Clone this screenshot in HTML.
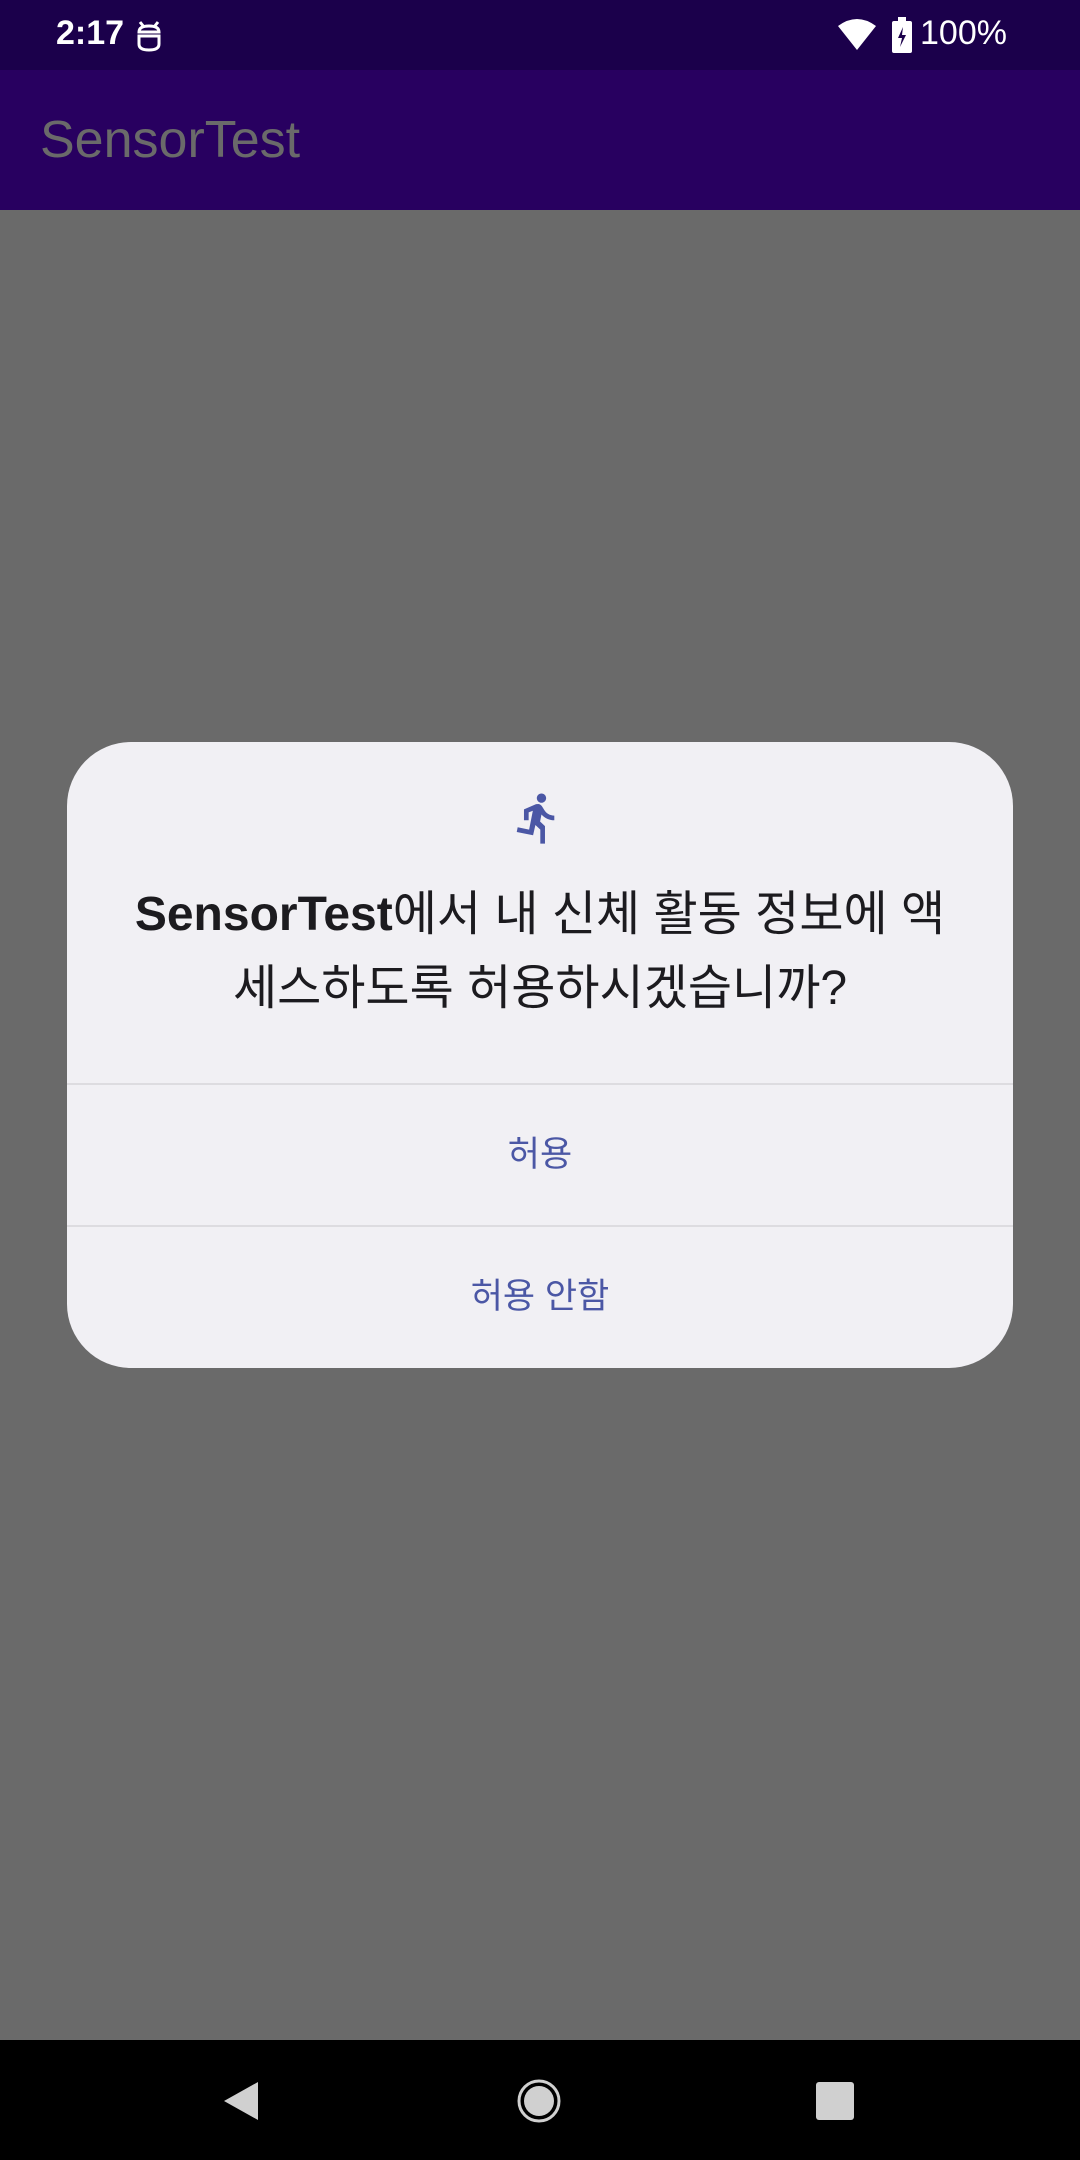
<!DOCTYPE html>
<html><head><meta charset="utf-8"><style>
*{margin:0;padding:0;box-sizing:border-box}
body{width:1080px;height:2160px;background:#6a6a6a;position:relative;overflow:hidden;font-family:"Liberation Sans","Noto Sans CJK KR",sans-serif}
.sb{position:absolute;top:0;left:0;width:1080px;height:70px;background:#1b004b;color:#fff}
.ab{position:absolute;top:70px;left:0;width:1080px;height:140px;background:#280060}
.ab span{position:absolute;left:40px;top:40px;font-size:52px;color:#6a6a6a}
.dlg{position:absolute;left:67px;top:742px;width:946px;height:626px;background:#f1f0f4;border-radius:64px;overflow:hidden}
.t{position:absolute;top:136px;left:0;width:946px;text-align:center;font-size:48px;line-height:74px;color:#1c1b1f}
.hr{position:absolute;left:0;width:946px;height:2px;background:#dddce0}
.btn{position:absolute;left:0;width:946px;text-align:center;font-size:35px;color:#4b57a5}
.nav{position:absolute;top:2040px;left:0;width:1080px;height:120px;background:#000}
</style></head><body>
<div class="sb">
<span style="position:absolute;left:56px;top:14px;font-size:34px;font-weight:bold">2:17</span>
<svg style="position:absolute;left:136px;top:18px" width="26" height="34" viewBox="0 0 26 34"><path d="M4 4 L8 9 M22 4 L18 9 M3 14 Q3 8 13 8 Q23 8 23 14 Z M3 18 H23 V26 Q23 32 13 32 Q3 32 3 26 Z" fill="none" stroke="#fff" stroke-width="3"/></svg>
<svg style="position:absolute;left:838px;top:18px" width="38" height="32" viewBox="0 0 38 32"><path d="M0 8 Q19 -6 38 8 L19 32 Z" fill="#fff"/></svg>
<svg style="position:absolute;left:892px;top:17px" width="20" height="36" viewBox="0 0 20 36"><rect x="0" y="4" width="20" height="32" rx="2" fill="#fff"/><rect x="6" y="0" width="8" height="5" fill="#fff"/><path d="M11 10 L6 21 H10 L8 30 L14 18 H10 Z" fill="#1b004b"/></svg>
<span style="position:absolute;left:920px;top:14px;font-size:34px">100%</span>
</div>
<div class="ab"><span>SensorTest</span></div>
<div class="dlg">
<svg style="position:absolute;left:443px;top:48px" width="56" height="56" viewBox="0 0 24 24"><path fill="#4b57a5" d="M13.49 5.48c1.1 0 2-.9 2-2s-.9-2-2-2-2 .9-2 2 .9 2 2 2zm-3.6 13.9l1-4.4 2.1 2v6h2v-7.5l-2.1-2 .6-3c1.3 1.5 3.3 2.5 5.5 2.5v-2c-1.9 0-3.5-1-4.3-2.4l-1-1.6c-.4-.6-1-1-1.7-1-.3 0-.5.1-.8.1l-5.2 2.2v4.7h2v-3.4l1.8-.7-1.6 8.1-4.9-1-.4 2 7 1.4z"/></svg>
<div class="t"><b>SensorTest</b>에서 내 신체 활동 정보에 액<br>세스하도록 허용하시겠습니까?</div>
<div class="hr" style="top:341px"></div>
<div class="btn" style="top:384px">허용</div>
<div class="hr" style="top:483px"></div>
<div class="btn" style="top:526px">허용 안함</div>
</div>
<div class="nav">
<svg style="position:absolute;left:222px;top:40px" width="38" height="42" viewBox="0 0 38 42"><path d="M36 2 L2 21 L36 40 Z" fill="#d0d0d0"/></svg>
<svg style="position:absolute;left:516px;top:38px" width="46" height="46" viewBox="0 0 46 46"><circle cx="23" cy="23" r="20" fill="none" stroke="#d0d0d0" stroke-width="3"/><circle cx="23" cy="23" r="15" fill="#d0d0d0"/></svg>
<div style="position:absolute;left:816px;top:42px;width:38px;height:38px;background:#d0d0d0;border-radius:3px"></div>
</div>
</body></html>
